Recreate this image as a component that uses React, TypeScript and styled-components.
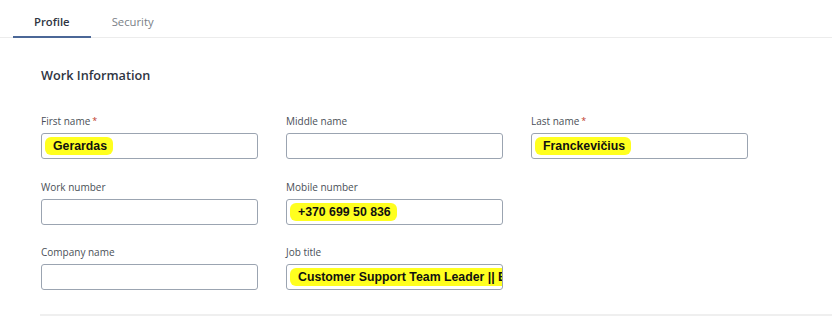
import styled, { createGlobalStyle } from "styled-components";

const GlobalStyle = createGlobalStyle`
  body {
    margin: 0;
    background: #ffffff;
    font-family: "Open Sans", "Noto Sans", sans-serif;
  }
`;

interface Field {
  label: string;
  value?: string;
  required?: boolean;
}

const rows: (Field | null)[][] = [
  [
    { label: "First name", value: "Gerardas", required: true },
    { label: "Middle name" },
    { label: "Last name", value: "Franckevičius", required: true },
  ],
  [
    { label: "Work number" },
    { label: "Mobile number", value: "+370 699 50 836" },
    null,
  ],
  [
    { label: "Company name" },
    { label: "Job title", value: "Customer Support Team Leader || Expert" },
    null,
  ],
];

export default function App() {
  return (
    <Page>
      <GlobalStyle />
      <TabBar>
        <Tab active>Profile</Tab>
        <Tab>Security</Tab>
      </TabBar>
      <Section>
        <Heading>Work Information</Heading>
        <Grid>
          {rows.flat().map((f, i) =>
            f ? (
              <FieldBox key={i}>
                <Label>
                  {f.label}
                  {f.required && <Star>*</Star>}
                </Label>
                <InputBox>
                  {f.value && <Marker>{f.value}</Marker>}
                </InputBox>
              </FieldBox>
            ) : (
              <div key={i} />
            )
          )}
        </Grid>
        <Divider />
      </Section>
    </Page>
  );
}

const Page = styled.div`
  width: 832px;
  height: 324px;
  overflow: hidden;
`;

const TabBar = styled.div`
  display: flex;
  padding-left: 13px;
  border-bottom: 1px solid #ececec;
`;

const Tab = styled.div<{ active?: boolean }>`
  padding: 14px 21px 6px;
  font-size: 11.3px;
  line-height: 16px;
  color: ${(p) => (p.active ? "#2f3542" : "#7a7f87")};
  font-weight: ${(p) => (p.active ? 600 : 400)};
  border-bottom: 2px solid ${(p) => (p.active ? "#4b6797" : "transparent")};
  margin-bottom: -1px;
`;

const Section = styled.div`
  padding: 28px 0 0 41px;
`;

const Heading = styled.h2`
  margin: 0;
  font-size: 12.7px;
  line-height: 18px;
  font-weight: 600;
  color: #2f3542;
`;

const Grid = styled.div`
  display: grid;
  grid-template-columns: repeat(3, 217px);
  column-gap: 28px;
  row-gap: 20.5px;
  margin-top: 30px;
`;

const FieldBox = styled.div`
  display: flex;
  flex-direction: column;
`;

const Label = styled.div`
  font-size: 10px;
  line-height: 14px;
  color: #4a4f57;
  margin-bottom: 5px;
`;

const Star = styled.span`
  color: #c0392b;
  font-size: 9px;
  margin-left: 2px;
  vertical-align: top;
`;

const InputBox = styled.div`
  box-sizing: border-box;
  height: 26px;
  border: 1px solid #9ba4b1;
  border-radius: 3px;
  display: flex;
  align-items: center;
  padding-left: 3px;
  overflow: hidden;
  white-space: nowrap;
`;

const Marker = styled.span`
  background: #ffff1f;
  padding: 2px 6px 2px 8px;
  border-radius: 6px;
  font-family: "Liberation Sans", Arial, sans-serif;
  font-weight: 700;
  font-size: 12.3px;
  line-height: 14px;
  color: #111111;
`;

const Divider = styled.div`
  height: 2px;
  background: #efefef;
  margin-top: 24px;
  margin-left: -1px;
`;
